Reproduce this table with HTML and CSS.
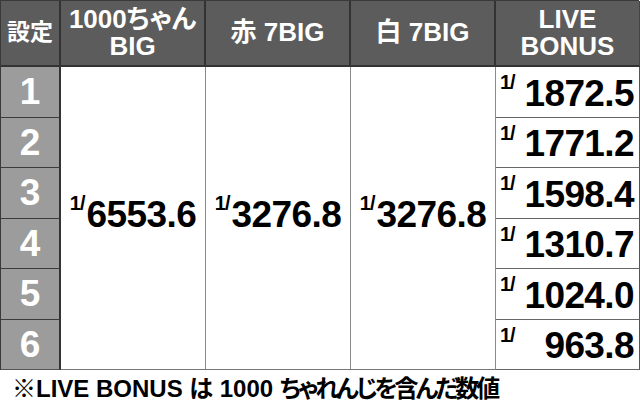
FILE: index.html
```html
<!DOCTYPE html>
<html lang="ja">
<head>
<meta charset="utf-8">
<link rel="stylesheet" href="styles.css">
</head>
<body>
<div class="page">
  <div class="table">
    <div class="h h-set">設定</div>
    <div class="h"><span class="hl">1000ちゃん</span><span class="hl">BIG</span></div>
    <div class="h">赤 7BIG</div>
    <div class="h">白 7BIG</div>
    <div class="h h-last"><span class="hl">LIVE</span><span class="hl">BONUS</span></div>

    <div class="stack">
      <div class="n">1</div>
      <div class="n">2</div>
      <div class="n">3</div>
      <div class="n">4</div>
      <div class="n">5</div>
      <div class="n">6</div>
    </div>
    <div class="big"><span class="sup">1/</span><span class="num">6553.6</span></div>
    <div class="big"><span class="sup">1/</span><span class="num">3276.8</span></div>
    <div class="big"><span class="sup">1/</span><span class="num">3276.8</span></div>
    <div class="stack stack-last">
      <div class="r"><span class="sup">1/</span><span class="num">1872.5</span></div>
      <div class="r"><span class="sup">1/</span><span class="num">1771.2</span></div>
      <div class="r"><span class="sup">1/</span><span class="num">1598.4</span></div>
      <div class="r"><span class="sup">1/</span><span class="num">1310.7</span></div>
      <div class="r"><span class="sup">1/</span><span class="num">1024.0</span></div>
      <div class="r"><span class="sup">1/</span><span class="num">963.8</span></div>
    </div>
  </div>
  <div class="note">※LIVE BONUS は 1000 <span class="kana">ちゃれんじを含んだ数値</span></div>
</div>
</body>
</html>
```

FILE: styles.css
```css
* { box-sizing: border-box; }
html, body { margin: 0; padding: 0; background: #fff; }
body {
  font-family: "Liberation Sans", "Noto Sans CJK JP", sans-serif;
  font-weight: bold;
  font-feature-settings: "palt";
}
.page { width: 640px; height: 402px; overflow: hidden; }
.table {
  display: grid;
  grid-template-columns: 60px 145px 145px 145px 144px;
  grid-template-rows: 66px 303px;
  width: 639px;
  border-left: 1px solid #3a3a3a;
  border-top: 1px solid #3a3a3a;
}
.h {
  background: #5c5c5c;
  color: #fff;
  border-right: 2px solid #333;
  border-bottom: 2px solid #333;
  display: flex;
  flex-direction: column;
  align-items: center;
  justify-content: center;
  text-align: center;
  font-size: 26px;
  line-height: 27px;
  padding-bottom: 1px;
}
.hl { display: block; height: 27px; line-height: 27px; }
.h-set { font-size: 23px; }
.h-last { border-right: 1px solid #444; }
.stack { display: flex; flex-direction: column; }
.n {
  flex: 1;
  background: #9c9c9c;
  color: #fff;
  border-right: 2px solid #333;
  border-bottom: 1px solid #3c3c3c;
  display: flex;
  align-items: center;
  justify-content: center;
  font-size: 37px;
  line-height: 1;
}
.n:last-child { border-bottom: 1px solid #555; }
.big {
  border-right: 1px solid #8a8a8a;
  border-bottom: 1px solid #777;
  display: flex;
  align-items: center;
  justify-content: center;
  padding-bottom: 8px;
  color: #000;
}
.big .sup { margin-right: 2px; }
.r {
  flex: 1;
  border-right: 1px solid #555;
  border-bottom: 1px solid #666;
  display: flex;
  align-items: center;
  justify-content: space-between;
  padding: 3px 5px 0 4px;
  color: #000;
}
.sup {
  align-self: center;
  font-size: 20px;
  line-height: 1;
  letter-spacing: -1px;
  transform: translateY(-11px);
}
.num {
  font-size: 37px;
  line-height: 1;
  letter-spacing: -0.6px;
}
.note {
  height: 33px;
  padding: 4px 0 0 12px;
  font-size: 24px;
  line-height: 30px;
  color: #000;
  white-space: nowrap;
}
.kana { letter-spacing: -3px; }
```
